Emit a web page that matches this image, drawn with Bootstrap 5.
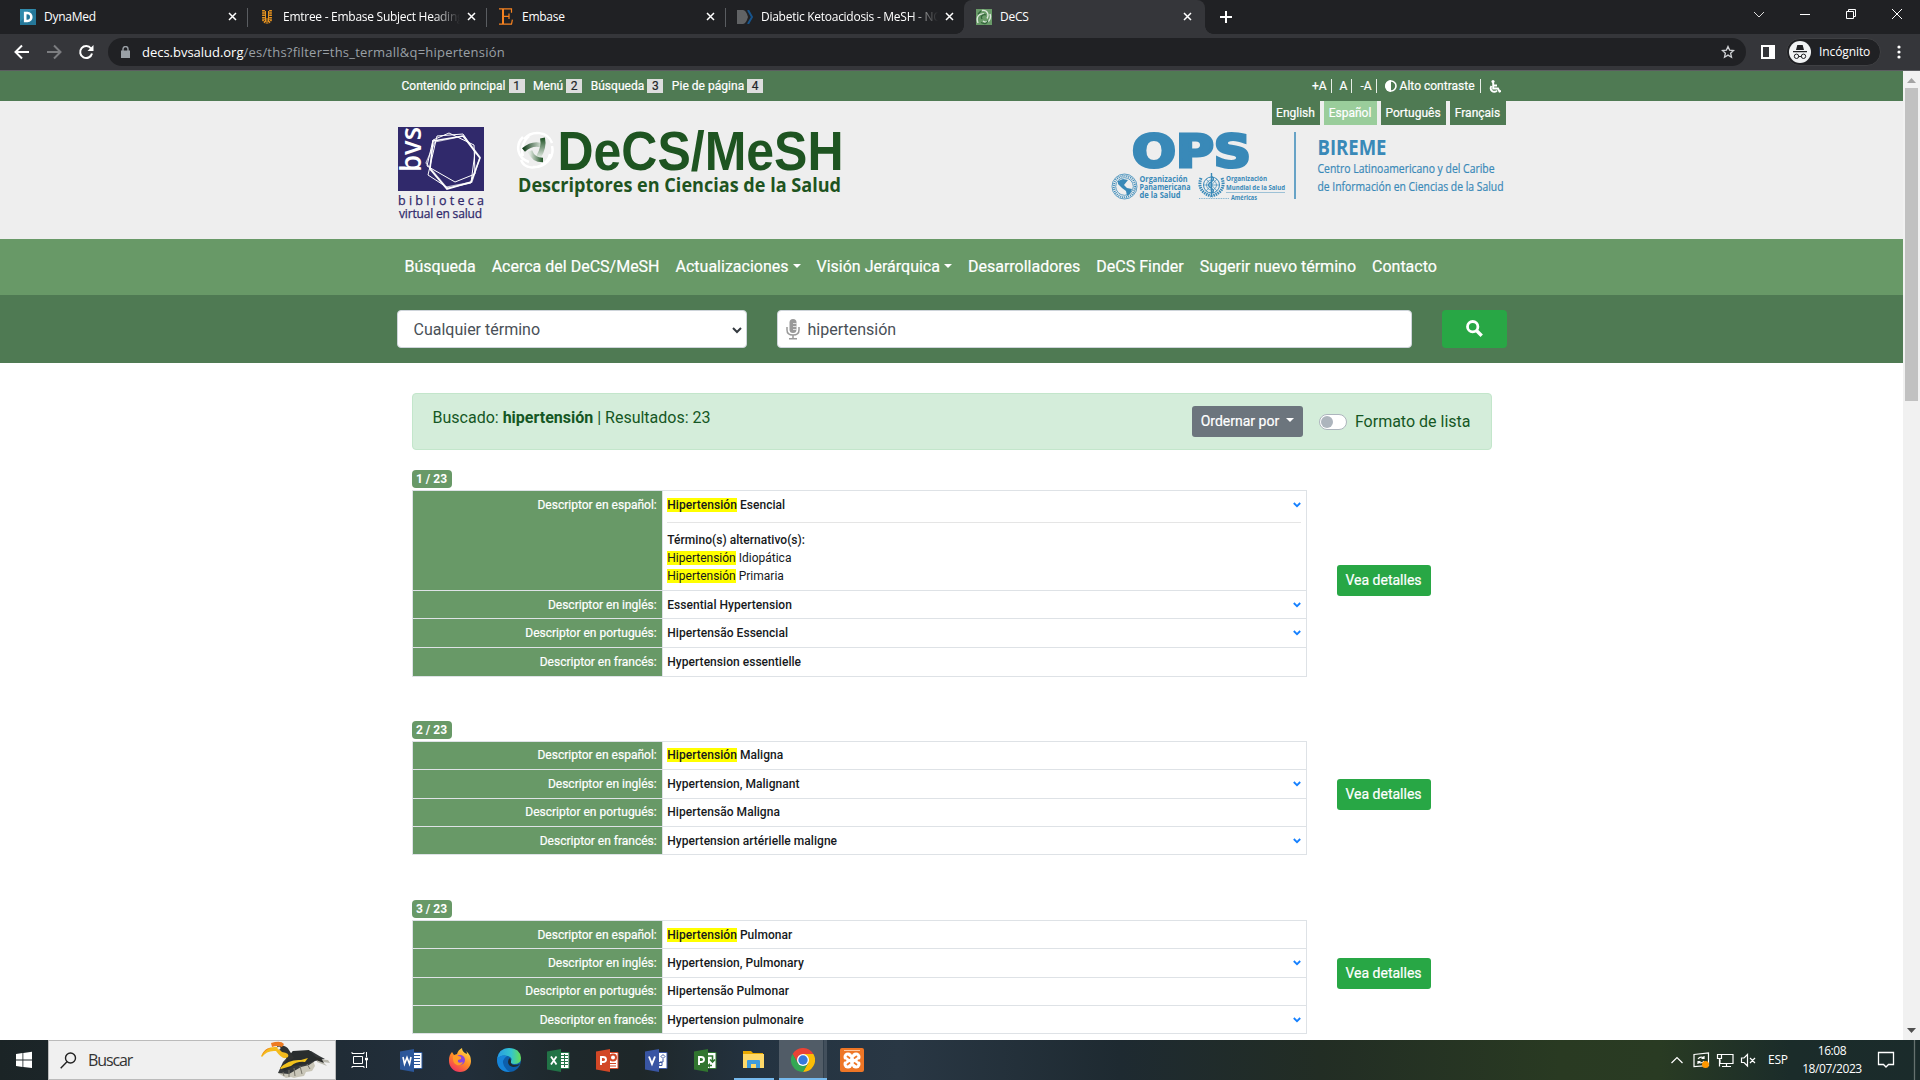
<!DOCTYPE html>
<html lang="es">
<head>
<meta charset="utf-8">
<title>DeCS</title>
<link href="https://cdn.jsdelivr.net/npm/bootstrap@5.3.0/dist/css/bootstrap.min.css" rel="stylesheet">
<style>
html,body{height:1080px;overflow:hidden}
body{font-family:Roboto,"Liberation Sans",sans-serif;color:#212529;width:1920px;background:#fff}
svg{display:block;flex:none}
.ui{font-family:"Open Sans","Noto Sans",sans-serif}
/* browser window */
.tabstrip{height:34px;background:#202124;color:#fff;font-size:12px;padding-left:9px}
.tab{width:239px;height:34px;padding:0 11px 0 11px;position:relative;letter-spacing:-.27px;line-height:27px;padding-bottom:1px}
.tab+.tab:not(.tab-on):before{content:"";position:absolute;left:-1px;top:8px;height:19px;width:1px;background:#5a5d61}
.tab .fav{width:16px;margin-right:8px;display:flex;justify-content:center}
.tab .ttl{flex:1;white-space:nowrap;overflow:hidden}
.tab .fade-end{-webkit-mask-image:linear-gradient(90deg,#000 150px,transparent 177px)}
.tab .x{margin-left:7px}
.tab-on{background:#35363a;border-radius:8px 8px 0 0;width:241px;margin-left:-1px;padding-left:12px;padding-right:13px}
.tab-on:after,.tab-on:before{content:"";position:absolute;bottom:0;width:8px;height:8px}
.tab-on:before{left:-8px;background:radial-gradient(circle at 0 0,#202124 7.5px,#35363a 8px)}
.tab-on:after{right:-8px;background:radial-gradient(circle at 100% 0,#202124 7.5px,#35363a 8px)}
.winctl{margin-left:auto;width:184px;padding-bottom:6px}
.winctl svg{width:46px;height:28px}
.toolbar{height:37px;background:#35363a;border-bottom:1px solid #5c5d61;padding-left:12px}
.omni{width:1638px;height:28px;border-radius:14px;background:#202124;color:#9aa0a6;font-size:13px;margin-left:13px;padding:0 11px 0 13px;letter-spacing:.22px}
.omni b{font-weight:400;color:#fff;letter-spacing:-.02px}
.incog{width:95px;height:28px;border-radius:14px;background:#202124;border:1px solid #3f4043;color:#fff;font-size:12px;padding-left:2px;letter-spacing:-.1px}
/* page */
.viewport{height:969px;overflow:hidden}
.page-col{width:1903px}
.wrap{width:1140px;margin:0 auto;padding:0 15px}
.topbar{height:30px;background:#4f7a53;color:#fff;font-size:12px;-webkit-text-stroke:.2px}
.topbar .num{background:#ddd;color:#212529;display:inline-block;width:16px;height:14px;line-height:14px;text-align:center;margin-left:3px;font-weight:400}
.topbar .left{padding-left:5px;gap:8.500px;letter-spacing:.03px}
.topbar .sep{width:1px;height:14px;background:#e8efe8}
.head{height:138px;background:#eee}
.langs{gap:4px;font-size:12px;color:#fff;-webkit-text-stroke:.2px}
.langs span{height:24px;line-height:24px;background:#4f7a53;text-align:center}
.langs .on{background:#9acd9b}
.mainnav{height:56px;background:#689967;color:#fff;font-size:16px;padding:0}
.mainnav a{color:#fff;padding:0 8px;text-decoration:none;white-space:nowrap;-webkit-text-stroke:.2px #fff}
.dropdown-toggle:after{margin-left:4px}
.searchbar{height:68px;background:#4f7a53}
.field{height:38px;border:1px solid #ced4da;border-radius:4px;background:#fff;color:#495057;padding-top:1px}
.sel{width:350px;padding:1px 4px 0 16px}
.inp{width:635px;margin-left:30px;padding-left:8px}
.go{width:65px;height:38px;background:#28a745;border-radius:4px;margin-left:30px;padding-bottom:1px}
.results{width:1080px;margin:30px auto 0}
.found{height:57px;background:#d4edda;border:1px solid #c3e6cb;border-radius:4px;color:#155724;padding:0 20px 0 20px}
.order{background:#6c757d;color:#fff;font-size:14px;height:31px;width:111px;border-radius:3px;line-height:31px;-webkit-text-stroke:.2px #fff}
.order:after{margin-left:7px}
.knob{width:28px;height:16px;border:1px solid #adb5bd;border-radius:8px;background:#fff;padding:1px;margin:0 8px 0 16px}
.knob i{display:block;width:12px;height:12px;border-radius:50%;background:#adb5bd}
.num-tag{width:40px;height:18px;line-height:18px;background:#689967;color:#fff;border-radius:4px;font-weight:700;font-size:12px;text-align:center}
.entry{margin-bottom:44.700px}
.terms{width:895px;border:1px solid #dee2e6;margin:2px 0 0;font-size:12px;line-height:18px;border-collapse:collapse}
.terms th,.terms td{border:1px solid #dee2e6;padding:4.7px 4.8px;vertical-align:top}
.first-entry{margin-bottom:44px}
.first-entry .terms th,.first-entry .terms td{padding:4.85px 4.8px}
.terms th{width:250px;background:#689967;color:#fff;font-weight:400;text-align:right;-webkit-text-stroke:.2px #fff}
.terms td{font-weight:500;color:#16191c;letter-spacing:.04px}
.hl{background:#ff0}
.alt{border-top:1px solid #e5e5e5;margin-top:8px;padding-top:8px}
.alt .fw-normal{letter-spacing:0}
.details{width:94px;height:31px;background:#28a745;color:#fff;border-radius:3px;font-size:14px;line-height:31px;text-align:center;margin:-5px 0 0 30px;-webkit-text-stroke:.2px #fff}
.first-entry .details{margin-top:-4px}
.sbar{width:17px;background:#f1f1f1;padding:17px 2px 0;position:relative}
.sbar svg{position:absolute;left:4px}
.thumb{height:313px;background:#c1c1c1}
/* taskbar */
.taskbar{height:40px;color:#fff;background:linear-gradient(90deg,#1b2426 0,#202c36 340px,#222f3c 450px,#1e282b 570px,#1e2729 640px,#243341 760px,#293744 900px,#1e2a31 1120px,#222d24 1320px,#293a22 1560px,#293b23 1660px,#1b2c2a 1790px,#1b2b2b)}
.findbox{width:288px;height:40px;background:#f0f0f0;border:1px solid #bbb;color:#333;font-size:15px;padding-left:11px}
.app{width:49px;height:40px;display:flex;align-items:center;justify-content:center}
.app.open{border-bottom:2px solid #76b9ed;width:40px;margin:0 5px 0 4px;padding-top:2px}
.app.active{border-bottom:2px solid #76b9ed;width:48px;margin-right:1px;padding:2px 0 0 0;background:linear-gradient(90deg,#515c67 0 44px,#32404d 44px 45px,#424f5c 45px)}
.tray{font-size:12px;letter-spacing:-.25px}
</style>
</head>
<body>
<div class="tabstrip ui d-flex align-items-start">
  <div class="tab d-flex align-items-center"><span class="fav"><svg width="16" height="16"><path fill="#318bac" d="M0 0h16v16H0z"/><path fill="#195f83" d="M0 13 11 2l5-2v16H0z" opacity=".45"/><path fill="none" stroke="#fff" stroke-width="2.6" d="M5.2 4h2.2c5.2 0 5.2 8 0 8H5.2z"/></svg></span><span class="ttl">DynaMed</span><svg class="x" width="9" height="9" stroke="#fff" stroke-width="1.5"><path d="M1 1l7 7M8 1 1 8"/></svg></div>
  <div class="tab d-flex align-items-center"><span class="fav"><svg width="12" height="16" viewBox="0 0 12 16" fill="none" stroke="#e9941f"><path stroke-width="2.800" stroke-dasharray="1.500 .8" d="M2.500 1v10l2.500 3M9.500 1v10L7 14"/><path stroke-width="1" d="M4.500 2v10M7.500 2v10M6 9v6"/></svg></span><span class="ttl fade-end">Emtree - Embase Subject Headings</span><svg class="x" width="9" height="9" stroke="#fff" stroke-width="1.5"><path d="M1 1l7 7M8 1 1 8"/></svg></div>
  <div class="tab d-flex align-items-center"><span class="fav"><svg width="14" height="17" fill="none" stroke="#f58220"><path stroke-width="2" d="M4 1v15"/><path stroke-width="1.200" d="M0 .8h12.500v4M0 16.200h12.500l.9-4.500M4 8.300h6M10 5.500v5.500"/></svg></span><span class="ttl">Embase</span><svg class="x" width="9" height="9" stroke="#fff" stroke-width="1.5"><path d="M1 1l7 7M8 1 1 8"/></svg></div>
  <div class="tab d-flex align-items-center"><span class="fav"><svg width="16" height="14"><path fill="#616365" d="M0 0h6q3 0 5 7-2 7-5 7H0z"/><path fill="none" stroke="#17548c" stroke-width="2" d="m11 0 4 7-4 7"/></svg></span><span class="ttl fade-end">Diabetic Ketoacidosis - MeSH - NCBI</span><svg class="x" width="9" height="9" stroke="#fff" stroke-width="1.5"><path d="M1 1l7 7M8 1 1 8"/></svg></div>
  <div class="tab tab-on d-flex align-items-center"><span class="fav"><svg width="16" height="16" fill="none"><path fill="#699b68" d="M0 0h16v16H0z"/><path stroke="#dce8dc" stroke-width="1.400" d="M6 1.500c6-1 7 5 5 8M14 5c2 6-3 10-7 7M2 14C0 9 2 4 8 5"/><path stroke="#32643a" stroke-width="1.300" d="M6 10c-2-3 1-5 4-4M5 13.500c4 2 6 1 7-2M2 5l3-3"/></svg></span><span class="ttl">DeCS</span><svg class="x" width="9" height="9" stroke="#fff" stroke-width="1.5"><path d="M1 1l7 7M8 1 1 8"/></svg></div>
  <svg width="42" height="34" stroke="#fff" stroke-width="2"><path d="M15 17h12M21 11v12"/></svg>
  <div class="winctl d-flex"><svg viewBox="0 0 46 28" fill="none" stroke="#ddd"><path d="m18 12 5 5 5-5"/></svg><svg viewBox="0 0 46 28" stroke="#fff"><path d="M18 14.5h10"/></svg><svg viewBox="0 0 46 28" fill="none" stroke="#fff"><path d="M18.500 11.500h7v7h-7zM20.500 11V9.500h7v7H26"/></svg><svg viewBox="0 0 46 28" stroke="#fff"><path d="m18 9 10 10M28 9 18 19"/></svg></div>
</div>
<div class="toolbar ui d-flex align-items-center">
  <svg width="83" height="36" fill="none" stroke-width="2"><path stroke="#fff" d="M17 18H4m6-6.500L3.500 18l6.500 6.500"/><path stroke="#7c7d80" d="M35 18h13m-6-6.500 6.500 6.500-6.500 6.500"/><path stroke="#fff" d="M79 14.500a6 6 0 1 0 1 5"/><path fill="#fff" d="M75.500 17h6v-6z"/></svg>
  <div class="omni d-flex align-items-center"><svg width="9" height="12"><path fill="#9aa0a6" d="M0 4.500h9V12H0z"/><path fill="none" stroke="#9aa0a6" stroke-width="1.400" d="M2 5V3a2.500 2.500 0 0 1 5 0v2"/></svg><span style="margin-left:12px;padding-top:1px"><b>decs.bvsalud.org</b>/es/ths?filter=ths_termall&amp;q=hipertensión</span><svg class="ms-auto" width="14" height="14" viewBox="0 0 14 14" fill="none" stroke="#d0d2d5" stroke-width="1.300"><path d="m7 1.500 1.600 3.600 4 .4-3 2.700.9 4L7 10.100l-3.500 2.100.9-4-3-2.700 4-.4z"/></svg></div>
  <svg width="40" height="28"><path fill="none" stroke="#fff" stroke-width="2" d="M16 8h12v12H16z"/><path fill="#fff" d="M23 8h5v12h-5z"/></svg>
  <div class="incog d-flex align-items-center"><svg width="22" height="22"><circle cx="11" cy="11" r="11" fill="#f1f3f4"/><path fill="#202124" d="m7 9 1.300-5h5.400L15 9zM4 10h14v1.200H4z"/><path fill="none" stroke="#202124" d="M9.500 15.500h3"/><circle cx="7.500" cy="15.300" r="2.200" fill="none" stroke="#202124"/><circle cx="14.500" cy="15.300" r="2.200" fill="none" stroke="#202124"/></svg><span style="margin-left:8px">Incógnito</span></div>
  <svg width="36" height="28" fill="#fff"><circle cx="18" cy="9" r="1.600"/><circle cx="18" cy="14" r="1.600"/><circle cx="18" cy="19" r="1.600"/></svg>
</div>

<div class="viewport d-flex">
<div class="page-col">
  <div class="topbar"><div class="wrap d-flex align-items-center h-100">
    <div class="left d-flex"><span>Contenido principal<span class="num">1</span></span><span>Menú<span class="num">2</span></span><span>Búsqueda<span class="num">3</span></span><span>Pie de página<span class="num">4</span></span></div>
    <div class="ms-auto d-flex align-items-center" style="padding-right:6px"><span>+A</span><i class="sep ms-1 me-1"></i><span class="mx-1">A</span><i class="sep"></i><span class="ms-2 me-1">-A</span><i class="sep me-2"></i><svg width="12" height="12"><circle cx="6" cy="6" r="5" fill="none" stroke="#fff" stroke-width="1.600"/><path fill="#fff" d="M6 0a6 6 0 0 0 0 12z"/></svg><span style="margin:0 5px 0 3px">Alto contraste</span><i class="sep me-2"></i><svg width="12" height="13" fill="none" stroke="#fff" stroke-width="1.900"><circle cx="4" cy="1.600" r="1.600" fill="#fff" stroke="none"/><path d="M4.200 3v5.500H9l1.500 3 1.500-.5M4.500 5.500H8M2.500 6A3.500 3.500 0 1 0 8 10.500"/></svg></div>
  </div></div>

  <div class="head"><div class="wrap d-flex">
    <svg style="margin:26px 0 0 1px" width="88" height="96" viewBox="0 0 88 96">
      <path fill="#30296b" d="M0 0h86v64H0z"/>
      <text transform="translate(23 45) rotate(-90)" font-family="Open Sans" font-size="28" font-weight="600" fill="#fff" textLength="45" lengthAdjust="spacingAndGlyphs">bvs</text>
      <g fill="none" stroke="#fff"><path stroke-width="1.600" d="m35 14 30-5 17 22-9 24-24 7-17-20z"/><path stroke-width="1" d="m51 6 25 12 1 29-20 8-28-16 6-26z"/><path stroke-width="1" d="m39 9 26-2 12 18-4 31-23 5-20-13z"/><path stroke-width="1.200" d="m37 15 29-6 16 21-8 25-26 5-20-24z" opacity=".7"/></g>
      <g font-family="Open Sans" fill="#30296b" stroke="#30296b" stroke-width=".25" font-size="12.500"><text x="0" y="77.500" textLength="86">biblioteca</text><text x="1" y="91" font-size="12" textLength="83">virtual en salud</text></g>
    </svg>
    <svg style="margin:26px 0 0 30px" width="330" height="75" viewBox="516 127 330 75">
      <defs><linearGradient id="g1"><stop stop-color="#143f1c"/><stop offset="1" stop-color="#cfdacf"/></linearGradient><linearGradient id="g2" x1="0" y1="1" x2="0" y2="0"><stop stop-color="#dfe7df"/><stop offset="1" stop-color="#1e5224"/></linearGradient><linearGradient id="g3"><stop stop-color="#dfe7df"/><stop offset="1" stop-color="#1e5224"/></linearGradient></defs>
      <g fill="none" stroke="#fff" stroke-width="2.500"><path d="M523 137c-8 8-6 21 6 25M524 139c8-9 24-8 28 4M552 146c3 12-8 22-19 21M521 160c4 10 15 8 21 5M529 136c-7 6-8 15-6 20M550 154c-1 6-4 9-9 11"/></g>
      <path fill="none" stroke="url(#g1)" stroke-width="4.500" d="M523.500 150q8-7 17-5"/><path fill="none" stroke="url(#g2)" stroke-width="5" d="M542.500 138q2 9-4 19"/><path fill="none" stroke="url(#g3)" stroke-width="4.500" d="M530 151q3 9 13 9"/>
      <text x="557.500" y="169.700" font-family="Liberation Sans" font-weight="700" font-size="56" fill="#1e5421" textLength="286" lengthAdjust="spacingAndGlyphs">DeCS/MeSH</text>
      <text x="518" y="192" font-family="Open Sans" font-weight="700" font-size="19" fill="#1e5421" textLength="323" lengthAdjust="spacingAndGlyphs">Descriptores en Ciencias de la Salud</text>
    </svg>
    <div class="ms-auto" style="margin-right:1px">
      <div class="langs d-flex justify-content-end"><span style="width:48px">English</span><span class="on" style="width:53px">Español</span><span style="width:65px">Português</span><span style="width:56px">Français</span></div>
      <svg width="398" height="80" viewBox="1108 125 398 80" fill="#3989b8" font-family="Open Sans">
        <text x="1132" y="167" font-family="DejaVu Sans" font-weight="700" font-size="45" stroke="#3989b8" stroke-width="3" textLength="119" lengthAdjust="spacingAndGlyphs">OPS</text>
        <path d="M1294 132h2v67h-2z" opacity=".75"/>
        <g font-size="8.200" font-weight="700"><text x="1139.500" y="181.500" textLength="48" lengthAdjust="spacingAndGlyphs">Organización</text><text x="1139.500" y="189.800" textLength="51" lengthAdjust="spacingAndGlyphs">Panamericana</text><text x="1139.500" y="198" textLength="41" lengthAdjust="spacingAndGlyphs">de la Salud</text></g>
        <g font-size="7.500" font-weight="700"><text x="1226" y="181" textLength="41" lengthAdjust="spacingAndGlyphs">Organización</text><text x="1226" y="189.500" textLength="59" lengthAdjust="spacingAndGlyphs">Mundial de la Salud</text><text x="1231" y="200" font-size="6.500" textLength="26" lengthAdjust="spacingAndGlyphs">Américas</text></g>
        <path d="M1226 192h59v.8h-59z" opacity=".6"/><path d="M1199 198.500h30" stroke="#3989b8" stroke-dasharray="1 .7" opacity=".6"/>
        <g fill="none" stroke="#3989b8"><circle cx="1124.500" cy="186.500" r="12.500" stroke-width=".8"/><circle cx="1124.500" cy="186.500" r="10.700" stroke-width="2" stroke-dasharray="1 1"/><circle cx="1124.500" cy="186.500" r="8.800" stroke-width=".8"/><path d="M1201 178c-3 8 0 15 10 18M1222 178c3 8 0 15-10 18" stroke-width="3" stroke-dasharray="1.500 .8"/><circle cx="1211.500" cy="185" r="8"/><circle cx="1211.500" cy="185" r="5" stroke-width=".7"/><path stroke-width=".7" d="M1204 185h15M1206 179l11 12M1217 179l-11 12"/><path d="M1211.500 173v24" stroke-width="1.400"/></g>
        <path d="m1118 181 5-2 5 1-4 5 3 3 5 1-2 5-3 2-1-5-4-3-4-4z"/><path fill="none" stroke="#3989b8" stroke-width="1.400" d="M1211 176q5 3 0 6t0 6 0 5"/>
        <text x="1317.500" y="154.500" font-weight="700" font-size="20.500" textLength="69" lengthAdjust="spacingAndGlyphs">BIREME</text>
        <g stroke="#3989b8" stroke-width=".2" font-size="12"><text x="1317.500" y="173.300" textLength="177" lengthAdjust="spacingAndGlyphs">Centro Latinoamericano y del Caribe</text>
        <text x="1317.500" y="191.300" textLength="186" lengthAdjust="spacingAndGlyphs">de Información en Ciencias de la Salud</text></g>
      </svg>
    </div>
  </div></div>

  <nav class="mainnav"><div class="wrap d-flex align-items-center h-100"><a>Búsqueda</a><a>Acerca del DeCS/MeSH</a><a class="dropdown-toggle">Actualizaciones</a><a class="dropdown-toggle">Visión Jerárquica</a><a>Desarrolladores</a><a>DeCS Finder</a><a>Sugerir nuevo término</a><a>Contacto</a></div></nav>

  <div class="searchbar"><div class="wrap d-flex align-items-center h-100">
    <div class="field sel d-flex align-items-center justify-content-between">Cualquier término<svg width="10" height="8" fill="none" stroke="#343a40" stroke-width="2"><path d="m1 2 4 4 4-4"/></svg></div>
    <div class="field inp d-flex align-items-center"><svg width="14" height="21" fill="none" stroke="#999"><rect x="3.500" y="0" width="7" height="14" rx="3.500" fill="#999" stroke="none"/><path stroke-width="1.500" d="M1 8v3q0 5 6 5t6-5V8M7 16v4M3 19.800h8"/><path stroke="#ddd" d="M7 4.500h4M7 7.500h4M7 10.500h4"/></svg><span class="ms-2">hipertensión</span></div>
    <div class="go d-flex align-items-center justify-content-center"><svg width="17" height="17" fill="none" stroke="#fff"><circle cx="6.700" cy="6.700" r="5.200" stroke-width="2.800"/><path stroke-width="3.400" d="m10.700 10.700 5 5"/></svg></div>
  </div></div>

  <div class="results">
    <div class="found d-flex"><div style="padding-top:12px">Buscado: <b>hipertensión</b> | Resultados: 23</div>
      <div class="ms-auto d-flex align-items-center py-2"><div class="order dropdown-toggle text-center">Ordernar por</div><div class="knob"><i></i></div><span>Formato de lista</span></div>
    </div>

    <div class="entry first-entry" style="margin-top:20px"><div class="num-tag">1 / 23</div><div class="d-flex align-items-center mt-0">
      <table class="terms"><tr><th>Descriptor en español:</th><td><div class="d-flex justify-content-between align-items-center"><span><span class="hl">Hipertensión</span> Esencial</span><svg width="8" height="6" fill="none" stroke="#1580ff" stroke-width="1.800"><path d="m.8 1 3.200 3.200L7.200 1"/></svg></div><div class="alt">Término(s) alternativo(s):<div class="fw-normal"><span class="hl">Hipertensión</span> Idiopática<br><span class="hl">Hipertensión</span> Primaria</div></div></td></tr>
      <tr><th>Descriptor en inglés:</th><td><div class="d-flex justify-content-between align-items-center">Essential Hypertension<svg width="8" height="6" fill="none" stroke="#1580ff" stroke-width="1.800"><path d="m.8 1 3.200 3.200L7.200 1"/></svg></div></td></tr>
      <tr><th>Descriptor en portugués:</th><td><div class="d-flex justify-content-between align-items-center">Hipertensão Essencial<svg width="8" height="6" fill="none" stroke="#1580ff" stroke-width="1.800"><path d="m.8 1 3.200 3.200L7.200 1"/></svg></div></td></tr>
      <tr><th>Descriptor en francés:</th><td>Hypertension essentielle</td></tr></table><div class="details">Vea detalles</div></div></div>

    <div class="entry"><div class="num-tag">2 / 23</div><div class="d-flex align-items-center">
      <table class="terms"><tr><th>Descriptor en español:</th><td><span class="hl">Hipertensión</span> Maligna</td></tr>
      <tr><th>Descriptor en inglés:</th><td><div class="d-flex justify-content-between align-items-center">Hypertension, Malignant<svg width="8" height="6" fill="none" stroke="#1580ff" stroke-width="1.800"><path d="m.8 1 3.200 3.200L7.200 1"/></svg></div></td></tr>
      <tr><th>Descriptor en portugués:</th><td>Hipertensão Maligna</td></tr>
      <tr><th>Descriptor en francés:</th><td><div class="d-flex justify-content-between align-items-center">Hypertension artérielle maligne<svg width="8" height="6" fill="none" stroke="#1580ff" stroke-width="1.800"><path d="m.8 1 3.200 3.200L7.200 1"/></svg></div></td></tr></table><div class="details">Vea detalles</div></div></div>

    <div class="entry"><div class="num-tag">3 / 23</div><div class="d-flex align-items-center">
      <table class="terms"><tr><th>Descriptor en español:</th><td><span class="hl">Hipertensión</span> Pulmonar</td></tr>
      <tr><th>Descriptor en inglés:</th><td><div class="d-flex justify-content-between align-items-center">Hypertension, Pulmonary<svg width="8" height="6" fill="none" stroke="#1580ff" stroke-width="1.800"><path d="m.8 1 3.200 3.200L7.200 1"/></svg></div></td></tr>
      <tr><th>Descriptor en portugués:</th><td>Hipertensão Pulmonar</td></tr>
      <tr><th>Descriptor en francés:</th><td><div class="d-flex justify-content-between align-items-center">Hypertension pulmonaire<svg width="8" height="6" fill="none" stroke="#1580ff" stroke-width="1.800"><path d="m.8 1 3.200 3.200L7.200 1"/></svg></div></td></tr></table><div class="details">Vea detalles</div></div></div>
  </div>
</div>
<div class="sbar"><svg style="top:7px" width="9" height="5"><path fill="#a3a3a3" d="M0 5h9L4.500 0z"/></svg><div class="thumb"></div><svg style="bottom:7px" width="9" height="5"><path fill="#505050" d="M0 0h9L4.500 5z"/></svg></div>
</div>

<div class="taskbar ui d-flex">
  <svg width="48" height="40" fill="#fff"><path d="m16 14 6.500-1v6.500H16zM23.300 12.900 32 11.800v7.700h-8.700zM16 20.400h6.500V27L16 26zM23.300 20.400H32v7.700l-8.700-1.100z"/></svg>
  <div class="findbox d-flex align-items-center"><svg width="17" height="17" fill="none" stroke="#222" stroke-width="1.400"><circle cx="10.500" cy="6" r="5"/><path d="M7 9.800.7 16.200"/></svg><span style="margin-left:11px;letter-spacing:-1.1px;font-size:16px">Buscar</span>
    <svg style="margin-left:auto;margin-right:4px" width="70" height="38" viewBox="0 0 70 38">
      <path fill="#c9c6b8" d="m24 22 28-3 2 6-3 5-6 1-2 4-6 1-4 1-3-1-5 1-8-5z"/><path fill="#35383a" d="m32 10 18 0q8 5 14 8l-10 2-6 4-8 2-12 7-11-1 5-11z"/><path stroke="#777469" fill="none" d="m22 31 1 4m5-6v7m5-9 1 8m5-10 2 8m5-10 3 5"/><path fill="#292d2e" d="m32 10 16-1 9 9-11 5-14 2-8 5-5-3 7-8z"/><path fill="#f2c21c" d="M19 27q9-9 21-8l7-2-3 4q-8-1-14 4l-10 3z"/><path fill="#b9b8ae" d="m56 18 11 1 2 3-7-1 4 4-10-4z"/><path fill="#2b2c2a" d="m53 16 7 1 3 5-8-3z"/><path fill="#303231" d="M16 5q9-2 12 4l5 8-5 3-9-9z"/><path fill="#f4bb1e" d="M0 15Q4 5 16 6l5 5q8 1 6 5-5 4-12-6Q6 9 1 16z"/><path fill="#ee7b22" d="M10 2q10-3 13 1l-2 3q-5-2-10 0zM1 15q2-8 9-8-7 2-9 8z"/><circle cx="18" cy="7" r="1.500" fill="#eee"/>
    </svg></div>
  <div class="app"><svg width="18" height="18" fill="none" stroke="#fff" style="margin-right:1px"><path d="M2.500 5.500h9v7h-9zM1 2.500V1M1 2.500h12V1M1 15.500V17M1 15.500h12V17M15.500 1v5M15.500 9v8"/><path fill="#fff" d="M14.500 7h2v2h-2z"/></svg></div>
  <div class="app" style="margin-left:2px"><svg width="23" height="23"><path fill="#fff" stroke="#2b579a" d="M12 3.500h10v16H12z"/><path stroke="#2b579a" d="M14 6.500h6M14 9.500h6M14 12.500h6M14 15.500h6"/><path fill="#2b579a" d="M0 2.500 14 0v23L0 20.500z"/><path fill="none" stroke="#fff" stroke-width="1.600" d="m3 8 1.500 7L7 8.500 9.500 15 11 8"/></svg></div>
  <div class="app"><svg width="24" height="24" style="margin-right:1px"><defs><linearGradient id="ff" x1=".8" y1="0" x2=".2" y2="1"><stop stop-color="#ffe14a"/><stop offset=".5" stop-color="#ff8a25"/><stop offset="1" stop-color="#ef2b65"/></linearGradient></defs><path fill="url(#ff)" d="M1 12q0-5 3-8l2 3 3-1q1-4 5-6 0 4 5 6 0-2-1-3 5 4 5 10A11 11 0 0 1 1 13z"/><circle cx="12" cy="12" r="5" fill="#8745df"/><path fill="#ff9b28" d="M5 8q3-2 5 0 4 0 3 3l-3 1q-1 4 5 2-2 4-6 3-5-2-4-9z"/></svg></div>
  <div class="app"><svg width="24" height="24" style="margin-right:2px"><defs><linearGradient id="ed"><stop stop-color="#279be4"/><stop offset=".6" stop-color="#35c5cc"/><stop offset="1" stop-color="#66df53"/></linearGradient></defs><circle cx="12" cy="12" r="12" fill="#0d5fac"/><path fill="url(#ed)" d="M0 11Q2 0 12 0q11 0 12 10 0 6-7 6-4 0-3-3 2-3-3-5Q4 6 0 11z"/><path fill="#1684d8" d="M0 11q4-5 10-3-6 4-3 10 2 4 6 6Q0 24 0 11z"/><path fill="#1f2a2f" d="M14 13q-1 3 3 4 3 0 6-1-2 3-7 3-5-1-5-5 0-3 2-4z"/></svg></div>
  <div class="app"><svg width="23" height="23"><path fill="#fff" stroke="#217346" d="M12 3.500h10v16H12z"/><path stroke="#217346" d="M13 6.500h8M13 9.500h8M13 12.500h8M13 15.500h8M17.500 5v13"/><path fill="#217346" d="M0 2.500 14 0v23L0 20.500z"/><path stroke="#fff" stroke-width="1.800" d="m4 7.500 5.500 8M9.500 7.500l-5.500 8"/></svg></div>
  <div class="app"><svg width="23" height="23"><path fill="#fff" stroke="#d24726" d="M12 3.500h10v16H12z"/><path fill="#d24726" d="M14 14h6v1h-6zM14 16.500h6v1h-6z"/><circle cx="17" cy="8.500" r="3" fill="none" stroke="#d24726" stroke-width="2"/><path fill="#d24726" d="M0 2.500 14 0v23L0 20.500z"/><path fill="none" stroke="#fff" stroke-width="1.900" d="M5 16V8h2q3 0 3 2.500T7 13H5"/></svg></div>
  <div class="app"><svg width="23" height="23"><path fill="#fff" stroke="#3955a3" d="M12 3.500h10v16H12z"/><path fill="none" stroke="#3955a3" d="m18 5.500 2 2-2 2-2-2zM18 10v3h-3M14 13.500h3v3h-3z"/><path fill="#3955a3" d="M0 2.500 14 0v23L0 20.500z"/><path fill="none" stroke="#fff" stroke-width="1.900" d="m4 7.500 3 7.500 3-7.500"/></svg></div>
  <div class="app"><svg width="23" height="23"><path fill="#fff" stroke="#31752f" d="M12 3.500h10v16H12z"/><path fill="none" stroke="#31752f" stroke-width="1.600" d="M14 7h4.500v5m-2.500-1.500 2.500 2.500 2.500-2.500M18 16.500h-4"/><path fill="#31752f" d="m16 14-3 2.500 3 2.500z"/><path fill="#31752f" d="M0 2.500 14 0v23L0 20.500z"/><path fill="none" stroke="#fff" stroke-width="1.900" d="M5 16V8h2q3 0 3 2.500T7 13H5"/></svg></div>
  <div class="app open"><svg width="22" height="20"><path fill="#eaa900" d="M0 1h8l2 2h10v4H0z"/><path fill="#ffd968" d="M0 4h21v14H0z"/><path fill="#3f9bdd" d="M4 11q0-1 1-1h11q1 0 1 1v7h-4v-4H8v4H4z"/></svg></div>
  <div class="app active"><svg width="24" height="24"><path fill="#ea4335" d="M1.600 6a12 12 0 0 1 20.800 0z M1.600 6 7 15l5-9z"/><path fill="#fbbc05" d="M22.400 6A12 12 0 0 1 12 24l5.200-9L12 6z"/><path fill="#34a853" d="M12 24A12 12 0 0 1 1.600 6l5.200 9 6 2.500 4-2z"/><circle cx="12" cy="12" r="6" fill="#fff"/><circle cx="12" cy="12" r="4.700" fill="#3679dc"/></svg></div>
  <div class="app" style="margin-left:-1px"><svg width="24" height="24"><rect width="24" height="24" rx="2" fill="#ee7626"/><g fill="#fff"><circle cx="8" cy="9" r="4.500"/><circle cx="16" cy="9" r="4.500"/><circle cx="8" cy="16" r="4.500"/><circle cx="16" cy="16" r="4.500"/><path d="M9 10h6v5H9z"/></g><path fill="none" stroke="#ee7626" stroke-width="1.800" stroke-linecap="round" d="m7.500 8.500 2 1.500M16.500 8.500l-2 1.500M7.500 16.500l2-1.500M16.500 16.500l-2-1.500M3 12.500h2.500M21 12.500h-2.500"/><path stroke="#ffc9a0" d="M4 2.500h16"/></svg></div>
  <div class="tray ms-auto d-flex align-items-center">
    <svg width="98" height="40" fill="none" stroke="#fff" stroke-width="1.200"><path d="m1.500 23 5.500-5.500 5.500 5.500"/><path d="M24 14.500 38.500 13v12.500l-14.500 1zM28 19q2-3 6-1m0-2v2.500h-2.500M34 21q-2 3-6 1m0 2v-2.500h2.500"/><circle cx="35.500" cy="24.500" r="3.500" fill="#ff9800" stroke="none"/><path d="M52 14.500h11v9H50v-4M47.500 14.500h4v4h-4zM49.500 18.500v8M56.500 23.500v3M52 26.500h9"/><path d="M71.500 18v4.500H74l3.500 3.500V14.500L74 18zM80 18l5 5M85 18l-5 5"/></svg>
    <span style="width:20px">ESP</span><div class="text-center" style="width:72px;margin-left:8px;line-height:18px;letter-spacing:-.4px">16:08<br>18/07/2023</div>
    <svg width="52" height="40" fill="none" stroke="#fff" stroke-width="1.300"><path d="M10.500 12.500h15v12h-5L18 27l-2.500-2.500h-5z"/><path stroke="#66716f" d="M46.500 0v40"/></svg>
  </div>
</div>
<script src="https://cdn.jsdelivr.net/npm/bootstrap@5.3.0/dist/js/bootstrap.bundle.min.js"></script>
</body>
</html>
